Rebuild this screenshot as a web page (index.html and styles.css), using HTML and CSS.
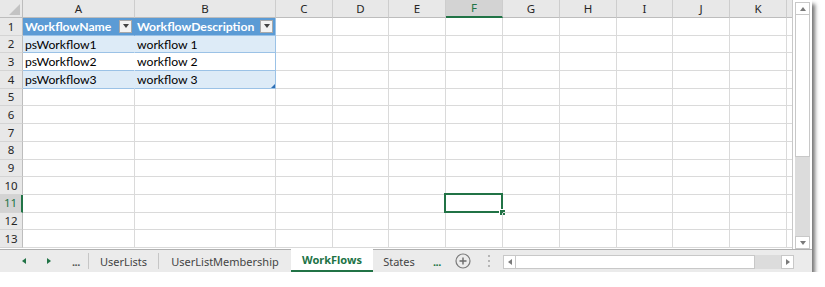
FILE: index.html
```html
<!DOCTYPE html>
<html lang="en">
<head>
  <meta charset="UTF-8">
  <title>WorkFlows</title>
  <link rel="stylesheet" href="styles.css">
</head>
<body>

<div class="window">
  <div class="main">
    <div id="sheet" class="sheet"></div>
    <div class="vscroll">
      <div class="sbtn up"></div>
      <div class="vthumb"></div>
      <div class="vtrack"></div>
      <div class="sbtn down"></div>
    </div>
  </div>

  <div class="tabbar">
    <div class="nav"><span class="tri-l"></span></div>
    <div class="nav"><span class="tri-r"></span></div>
    <div class="more">...</div>
    <div class="sep first"></div>
    <div class="tab t-userlists">UserLists</div>
    <div class="sep"></div>
    <div class="tab t-member">UserListMembership</div>
    <div class="tab active">WorkFlows</div>
    <div class="tab t-states">States</div>
    <div class="more green">...</div>
    <div class="add">
      <svg width="16" height="16" viewBox="0 0 16 16">
        <circle cx="8" cy="8" r="7" fill="none" stroke="#7a7a7a" stroke-width="1.2"/>
        <path d="M8 4.5v7M4.5 8h7" stroke="#6a6a6a" stroke-width="1.4"/>
      </svg>
    </div>
    <div class="grip"><i></i><i></i><i></i></div>
    <div class="hscroll">
      <div class="hbtn"><span class="tri-l grey"></span></div>
      <div class="hthumb"></div>
      <div class="htrack"></div>
      <div class="hbtn"><span class="tri-r grey"></span></div>
    </div>
  </div>
</div>

<script>
  const cols = [
    ['A', 112], ['B', 141], ['C', 57], ['D', 56], ['E', 57], ['F', 57],
    ['G', 57], ['H', 57], ['I', 56], ['J', 57], ['K', 57], ['', 7]
  ];
  const data = {
    1: ['WorkflowName', 'WorkflowDescription'],
    2: ['psWorkflow1', 'workflow 1'],
    3: ['psWorkflow2', 'workflow 2'],
    4: ['psWorkflow3', 'workflow 3']
  };
  const selRow = 11, selCol = 'F';

  function buildSheet() {
    const sheet = document.getElementById('sheet');
    let head = '<div class="row head"><div class="corner"></div>';
    cols.forEach(([name, w]) => {
      head += `<div class="colhead${name === selCol ? ' hl' : ''}" style="width:${w}px">${name}</div>`;
    });
    sheet.innerHTML = head + '</div>';

    for (let r = 1; r <= 13; r++) {
      let html = `<div class="row"><div class="rowhead${r === selRow ? ' hl' : ''}">${r}</div>`;
      cols.forEach(([name, w], i) => {
        let cls = 'cell';
        let inner = '';
        if (data[r] && i < 2) {
          inner = data[r][i];
          if (r === 1) {
            cls += ' th';
            inner = `<span>${inner}</span><span class="dd"></span>`;
          } else {
            cls += r % 2 === 0 ? ' band' : ' plain';
          }
          if (i === 1) cls += ' last';
          if (r === 4 && i === 1) cls += ' grip-end';
        }
        if (r === selRow && name === selCol) cls += ' sel';
        html += `<div class="${cls}" style="width:${w}px">${inner}</div>`;
      });
      sheet.insertAdjacentHTML('beforeend', html + '</div>');
    }
  }

  buildSheet();
</script>

</body>
</html>
```

FILE: styles.css
```css
html, body {
  margin: 0;
  padding: 0;
  background: #ffffff;
}
.window {
  width: 812px;
  height: 272px;
  background: #ffffff;
  display: flex;
  flex-direction: column;
  box-shadow: 3px 4px 4px rgba(0, 0, 0, 0.55);
  overflow: hidden;
}
.main {
  display: flex;
  height: 249px;
}

/* grid */
.sheet {
  width: 793px;
  height: 249px;
  overflow: hidden;
  border-right: 1px solid #c8c8c8;
  box-sizing: border-box;
  font-family: Lato, "Liberation Sans", sans-serif;
  font-size: 12.2px;
  color: #000;
}
.row {
  display: flex;
  height: 17.7px;
}
.row.head { height: 18px; }
.corner, .rowhead {
  width: 23px;
  flex: 0 0 23px;
  box-sizing: border-box;
  background: #e8e8e8;
  border-right: 1px solid #bdbdbd;
  border-bottom: 1px solid #d4d4d4;
}
.corner {
  display: flex;
  justify-content: flex-end;
  align-items: flex-end;
  border-bottom-color: #bdbdbd;
  padding: 0 2px 2px 0;
}
.corner::after {
  content: "";
  border-left: 11px solid transparent;
  border-bottom: 11px solid #c3c3c3;
}
.rowhead, .colhead {
  font-family: "Noto Sans", "Liberation Sans", sans-serif;
  font-size: 11.5px;
  color: #262626;
  display: flex;
  align-items: center;
  justify-content: center;
  line-height: 1;
}
.colhead {
  flex: 0 0 auto;
  box-sizing: border-box;
  background: #e8e8e8;
  border-right: 1px solid #cdcdcd;
  border-bottom: 1px solid #bdbdbd;
}
.colhead.hl {
  background: #d3d3d3;
  color: #217346;
  border-bottom: 2px solid #217346;
}
.rowhead.hl {
  background: #d3d3d3;
  color: #217346;
  border-right: 2px solid #217346;
}
.cell {
  flex: 0 0 auto;
  box-sizing: border-box;
  border-right: 1px solid #dadada;
  border-bottom: 1px solid #dadada;
  padding-left: 2px;
  display: flex;
  align-items: center;
  white-space: nowrap;
  position: relative;
}
.cell.th {
  background: #5b9bd5;
  color: #ffffff;
  font-weight: bold;
  border-right-color: #5b9bd5;
  border-bottom-color: #9bc2e6;
  justify-content: space-between;
  padding-right: 2px;
}
.cell.th.last { border-right-color: #9bc2e6; }
.cell.band {
  background: #ddebf7;
  border-right-color: #ddebf7;
  border-bottom-color: #9bc2e6;
}
.cell.plain {
  background: #ffffff;
  border-right-color: #ffffff;
  border-bottom-color: #9bc2e6;
}
.cell.band.last, .cell.plain.last { border-right-color: #9bc2e6; }
.dd {
  width: 13px;
  height: 13px;
  box-sizing: border-box;
  background: #f3f3f3;
  border: 1px solid #a9a9a9;
  display: flex;
  align-items: center;
  justify-content: center;
}
.dd::after {
  content: "";
  border-left: 3.5px solid transparent;
  border-right: 3.5px solid transparent;
  border-top: 4px solid #444;
}
.grip-end::after {
  content: "";
  position: absolute;
  right: 0;
  bottom: 0;
  border-left: 4px solid transparent;
  border-bottom: 4px solid #2e6fb5;
}
.sel::before {
  content: "";
  position: absolute;
  left: -2px;
  top: -2px;
  right: -1px;
  bottom: -1px;
  border: 2px solid #217346;
}
.sel::after {
  content: "";
  position: absolute;
  right: -4px;
  bottom: -4px;
  width: 5px;
  height: 5px;
  background: #217346;
  border: 1px solid #ffffff;
}

/* scrollbars */
.vscroll {
  width: 15px;
  margin-left: 2px;
  padding-top: 2px;
  display: flex;
  flex-direction: column;
}
.sbtn, .hbtn {
  box-sizing: border-box;
  background: #ffffff;
  border: 1px solid #c8c8c8;
  display: flex;
  align-items: center;
  justify-content: center;
}
.sbtn { height: 13px; }
.sbtn.up::after, .sbtn.down::after {
  content: "";
  border-left: 3.5px solid transparent;
  border-right: 3.5px solid transparent;
}
.sbtn.up::after { border-bottom: 4px solid #7a7a7a; }
.sbtn.down::after { border-top: 4px solid #7a7a7a; }
.vthumb {
  height: 142px;
  box-sizing: border-box;
  background: #ffffff;
  border: 1px solid #c8c8c8;
  border-top: none;
}
.vtrack {
  flex: 1;
  background: #dcdcdc;
}

/* sheet tabs */
.tabbar {
  flex: 1;
  display: flex;
  align-items: stretch;
  background: #ebebeb;
  border-top: 1px solid #b0b0b0;
  font-family: "Noto Sans", "Liberation Sans", sans-serif;
  font-size: 11px;
  color: #444;
  padding-left: 22px;
}
.nav {
  width: 6px;
  display: flex;
  align-items: center;
  margin-right: 19px;
}
.tri-l, .tri-r {
  border-top: 3.5px solid transparent;
  border-bottom: 3.5px solid transparent;
}
.tri-l { border-right: 4px solid #217346; }
.tri-r { border-left: 4px solid #217346; }
.tri-l.grey { border-right-color: #7a7a7a; }
.tri-r.grey { border-left-color: #7a7a7a; }
.more {
  width: 10px;
  display: flex;
  align-items: center;
  font-weight: bold;
  color: #555;
  letter-spacing: -0.5px;
}
.more.green { color: #217346; margin-left: 8px; }
.sep {
  width: 1px;
  background: #c6c6c6;
  margin: 3px 0;
}
.sep.first { margin-left: 6px; }
.tab {
  display: flex;
  align-items: center;
  justify-content: center;
  box-sizing: border-box;
}
.t-userlists { width: 69px; }
.t-member { width: 132px; }
.tab.active {
  width: 82px;
  background: #ffffff;
  color: #217346;
  font-weight: bold;
  border-bottom: 2px solid #217346;
  margin-top: -1px;
}
.t-states { width: 52px; }
.add {
  display: flex;
  align-items: center;
  margin-left: 12px;
}
.grip {
  width: 2px;
  margin-left: 17px;
  display: flex;
  flex-direction: column;
  justify-content: center;
  gap: 3px;
}
.grip i {
  width: 2px;
  height: 2px;
  background: #b5b5b5;
}
.hscroll {
  display: flex;
  margin-left: 13px;
  margin-top: 5px;
  height: 14px;
  width: 291px;
}
.hbtn { width: 13px; }
.hthumb {
  width: 239px;
  box-sizing: border-box;
  background: #ffffff;
  border: 1px solid #c8c8c8;
  border-left: none;
}
.htrack {
  flex: 1;
  background: #dcdcdc;
}
```
